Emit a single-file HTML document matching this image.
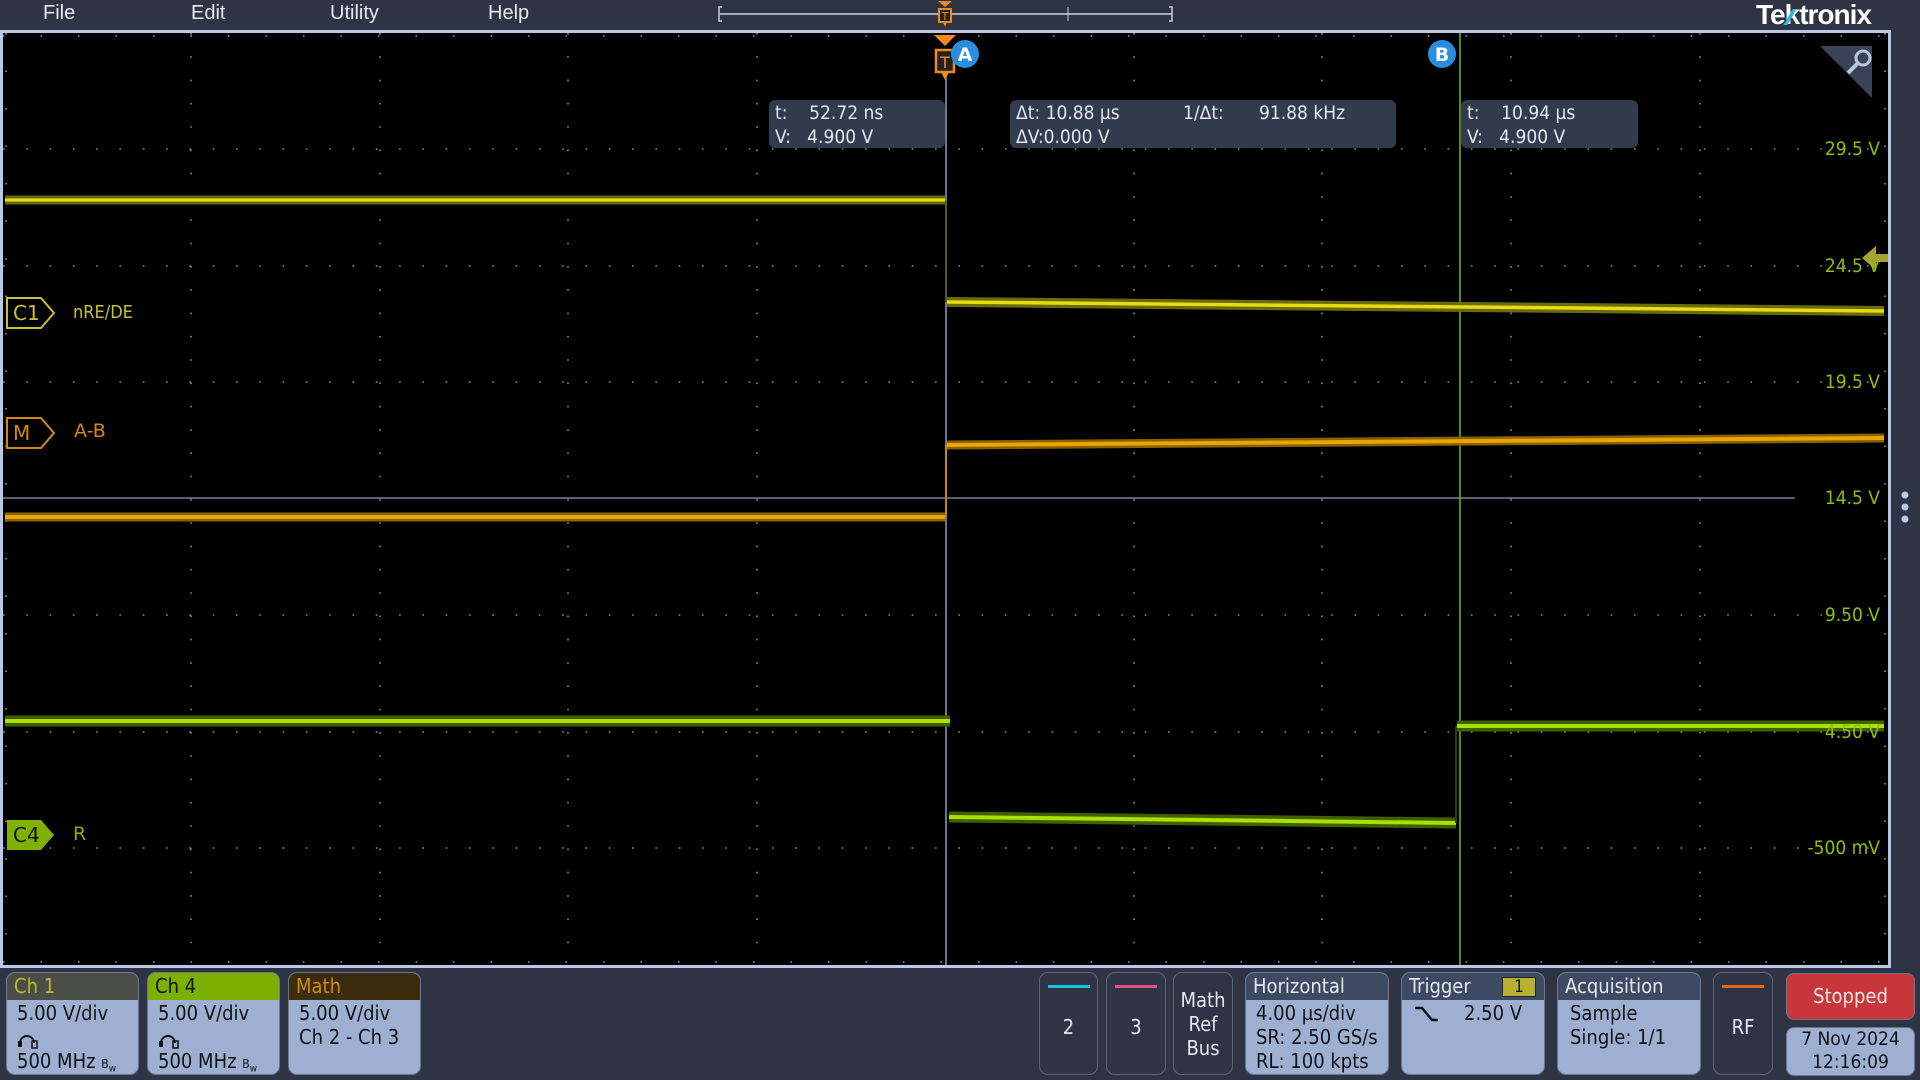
<!DOCTYPE html>
<html><head><meta charset="utf-8"><style>
*{margin:0;padding:0;box-sizing:border-box}
body{width:1920px;height:1080px;background:#2f3445;overflow:hidden;position:relative;font-family:"DejaVu Sans","Liberation Sans",sans-serif;}
.menu{position:absolute;top:2px;color:#e6e9f0;font-size:20px;font-family:"Liberation Sans Narrow","Liberation Sans",sans-serif;}
.ro{position:absolute;background:#323a4d;border-radius:6px;color:#e4e8f0;font-size:19px;line-height:24px;padding:1px 6px;font-family:"DejaVu Sans Condensed","DejaVu Sans",sans-serif;}
.badge{position:absolute;top:972px;height:103px;border-radius:9px;background:#9db0d2;border:1px solid #6c7690;overflow:hidden;font-size:20px;color:#111;font-family:"DejaVu Sans Condensed","DejaVu Sans",sans-serif;}
.badge .h{height:27px;padding-left:7px;line-height:27px}
.badge .b{padding-left:10px;line-height:24px;padding-top:1px}
.btn{position:absolute;top:972px;height:103px;border:1px solid #5c6478;border-radius:9px;color:#e4e8f0;font-size:20px;text-align:center;font-family:"DejaVu Sans Condensed","DejaVu Sans",sans-serif;}
.sc{position:absolute;right:40px;color:#8cc000;font-size:19px;font-family:"DejaVu Sans Condensed","DejaVu Sans",sans-serif;}
</style></head><body>
<div class="menu" style="left:43px">File</div>
<div class="menu" style="left:191px">Edit</div>
<div class="menu" style="left:330px">Utility</div>
<div class="menu" style="left:488px">Help</div>
<div style="position:absolute;left:1756px;top:-1px;color:#fff;font-size:28px;font-weight:bold;letter-spacing:-1px;font-family:'Liberation Sans',sans-serif">Te<span style="color:#fff;position:relative">k<span style="position:absolute;left:3px;top:10px;width:4px;height:16px;background:#2ab8e0;transform:skewX(-30deg)"></span></span>tronix</div>

<svg width="1920" height="1080" style="position:absolute;left:0;top:0">
<line x1="720" y1="14" x2="1172" y2="14" stroke="#c8d2e6" stroke-width="1.5"/>
<path d="M722 7 H719 V21 H722 M1169 7 H1172 V21 H1169" stroke="#c8d2e6" fill="none" stroke-width="1.5"/>
<line x1="1068" y1="7" x2="1068" y2="21" stroke="#c8d2e6"/>
<path d="M938 1 H952 L945 7Z" fill="#f08a1e"/>
<rect x="939" y="9" width="12" height="13" fill="#222" stroke="#f08a1e" stroke-width="2"/>
<text x="945" y="20" font-size="11" fill="#f08a1e" text-anchor="middle" font-family="DejaVu Sans">T</text>
<path d="M943 22 L945 27 L947 22" fill="#f08a1e"/>
<rect x="0" y="30" width="1891" height="938" fill="#b8c8e6"/>
<rect x="3" y="33" width="1885" height="932" fill="#000"/>
<g stroke="#7f8bab" stroke-width="1.6" stroke-dasharray="1.6 21.7">
<line x1="3" y1="149" x2="1888" y2="149"/><line x1="3" y1="266" x2="1888" y2="266"/><line x1="3" y1="382" x2="1888" y2="382"/>
<line x1="3" y1="615" x2="1888" y2="615"/><line x1="3" y1="732" x2="1888" y2="732"/><line x1="3" y1="848" x2="1888" y2="848"/>
</g>
<g stroke="#7f8bab" stroke-width="1.6" stroke-dasharray="1.6 21.7">
<line x1="191" y1="33" x2="191" y2="965"/><line x1="380" y1="33" x2="380" y2="965"/><line x1="568" y1="33" x2="568" y2="965"/><line x1="757" y1="33" x2="757" y2="965"/>
<line x1="1134" y1="33" x2="1134" y2="965"/><line x1="1322" y1="33" x2="1322" y2="965"/><line x1="1511" y1="33" x2="1511" y2="965"/><line x1="1700" y1="33" x2="1700" y2="965"/>
</g>
<g stroke="#8f9bbd" stroke-width="1.5" stroke-dasharray="1.5 36">
<line x1="3" y1="36" x2="1888" y2="36"/><line x1="3" y1="962" x2="1888" y2="962"/>
<line x1="6" y1="33" x2="6" y2="965"/><line x1="1885" y1="33" x2="1885" y2="965"/>
</g>
<line x1="3" y1="498" x2="1795" y2="498" stroke="#8f9bbd" stroke-width="1.2"/>
<line x1="946" y1="70" x2="946" y2="965" stroke="#8f9bbd" stroke-width="1.5"/>
<line x1="1460" y1="33" x2="1460" y2="965" stroke="#7fb800" stroke-width="1.5"/>
<g stroke-linecap="butt">
<line x1="5" y1="200" x2="945" y2="200" stroke="#6a6a10" stroke-width="9"/>
<line x1="5" y1="200" x2="945" y2="200" stroke="#e6dc10" stroke-width="3"/>
<line x1="947" y1="302" x2="1884" y2="311" stroke="#6a6a10" stroke-width="10"/>
<line x1="947" y1="302" x2="1884" y2="311" stroke="#e6dc10" stroke-width="3.5"/>
<line x1="946" y1="302" x2="946" y2="200" stroke="#5a5a10" stroke-width="2"/>
<line x1="5" y1="517" x2="945" y2="517" stroke="#8a6000" stroke-width="9"/>
<line x1="5" y1="517" x2="945" y2="517" stroke="#e8a400" stroke-width="4"/>
<line x1="947" y1="445" x2="1884" y2="438" stroke="#8a6000" stroke-width="9"/>
<line x1="947" y1="445" x2="1884" y2="438" stroke="#e8a400" stroke-width="4"/>
<line x1="946" y1="445" x2="946" y2="517" stroke="#c88a00" stroke-width="2"/>
<line x1="5" y1="721" x2="950" y2="721" stroke="#406000" stroke-width="11"/>
<line x1="5" y1="721" x2="950" y2="721" stroke="#a8e000" stroke-width="4"/>
<line x1="949" y1="817" x2="1456" y2="823" stroke="#406000" stroke-width="11"/>
<line x1="949" y1="817" x2="1456" y2="823" stroke="#a8e000" stroke-width="4"/>
<line x1="1457" y1="726" x2="1884" y2="726" stroke="#406000" stroke-width="11"/>
<line x1="1457" y1="726" x2="1884" y2="726" stroke="#a8e000" stroke-width="4"/>
<line x1="1456" y1="726" x2="1456" y2="823" stroke="#2a4000" stroke-width="2"/>
</g>
<path d="M934 35 H956 L945 46Z" fill="#f08a1e"/>
<rect x="936" y="50" width="18" height="22" fill="#222" stroke="#f08a1e" stroke-width="2.5"/>
<text x="945" y="68" font-size="16" fill="#f08a1e" text-anchor="middle" font-family="DejaVu Sans">T</text>
<path d="M941 72 L945 80 L949 72" fill="#f08a1e"/>
<circle cx="965" cy="54" r="14" fill="#2a8ee0"/><text x="965" y="61" font-size="19" font-weight="bold" fill="#fff" text-anchor="middle" font-family="DejaVu Sans">A</text>
<circle cx="1442" cy="54" r="14" fill="#2a8ee0"/><text x="1442" y="61" font-size="19" font-weight="bold" fill="#fff" text-anchor="middle" font-family="DejaVu Sans">B</text>
<path d="M1820 46 H1872 V98Z" fill="#3a4256"/>
<circle cx="1863" cy="58" r="7" fill="none" stroke="#b8c6e2" stroke-width="3"/>
<line x1="1858" y1="63" x2="1848" y2="73" stroke="#b8c6e2" stroke-width="4"/>
<path d="M7 298 H41 L54 313 L41 328 H7Z" fill="none" stroke="#c8c030" stroke-width="2"/>
<path d="M7 418 H41 L54 433 L41 448 H7Z" fill="none" stroke="#d08a10" stroke-width="2"/>
<path d="M7 820 H41 L54 835 L41 850 H7Z" fill="#80b000"/>
<path d="M1862 258 L1876 246 V254 H1888 V262 H1876 V270Z" fill="#a8a030"/>
<circle cx="1905" cy="495" r="3.5" fill="#b8c8e6"/><circle cx="1905" cy="507" r="3.5" fill="#b8c8e6"/><circle cx="1905" cy="519" r="3.5" fill="#b8c8e6"/>
<path d="M1415 1008 L1422 1008 L1432 1020 L1438 1020" fill="none" stroke="#111" stroke-width="2.5"/>
</svg>
<div style="position:absolute;left:13px;top:301px;color:#c8c030;font-size:20px">C1</div>
<div style="position:absolute;left:73px;top:302px;color:#c8c030;font-size:18px;font-family:'DejaVu Sans Condensed'">nRE/DE</div>
<div style="position:absolute;left:13px;top:421px;color:#d08a10;font-size:20px">M</div>
<div style="position:absolute;left:74px;top:420px;color:#d08a10;font-size:19px">A-B</div>
<div style="position:absolute;left:13px;top:823px;color:#111;font-size:20px">C4</div>
<div style="position:absolute;left:73px;top:823px;color:#80b000;font-size:19px">R</div>

<div class="sc" style="top:138px">29.5 V</div>
<div class="sc" style="top:255px">24.5 V</div>
<div class="sc" style="top:371px">19.5 V</div>
<div class="sc" style="top:487px">14.5 V</div>
<div class="sc" style="top:604px">9.50 V</div>
<div class="sc" style="top:721px">4.50 V</div>
<div class="sc" style="top:837px">-500 mV</div>

<div class="ro" style="left:769px;top:100px;width:176px;height:48px">t:&nbsp;&nbsp;&nbsp;&nbsp;52.72 ns<br>V:&nbsp;&nbsp;&nbsp;4.900 V</div>
<div class="ro" style="left:1010px;top:100px;width:386px;height:48px">Δt: 10.88 µs<span style="position:absolute;left:173px">1/Δt:</span><span style="position:absolute;left:249px">91.88 kHz</span><br>ΔV:0.000 V</div>
<div class="ro" style="left:1461px;top:100px;width:177px;height:48px">t:&nbsp;&nbsp;&nbsp;&nbsp;10.94 µs<br>V:&nbsp;&nbsp;&nbsp;4.900 V</div>

<div class="badge" style="left:6px;width:133px"><div class="h" style="background:#4a4e46;color:#c0b830">Ch 1</div><div class="b">5.00 V/div<br><svg width="24" height="20" style="vertical-align:middle"><path d="M3 14 a7 7 0 0 1 14 0" fill="none" stroke="#111" stroke-width="2"/><rect x="1" y="12" width="4" height="6" fill="#111"/><rect x="15" y="12" width="5" height="7" fill="none" stroke="#111" stroke-width="1.5"/></svg><br>500 MHz <span style="font-size:12px">B<sub>w</sub></span></div></div>
<div class="badge" style="left:147px;width:133px"><div class="h" style="background:#7cb000;color:#111">Ch 4</div><div class="b">5.00 V/div<br><svg width="24" height="20" style="vertical-align:middle"><path d="M3 14 a7 7 0 0 1 14 0" fill="none" stroke="#111" stroke-width="2"/><rect x="1" y="12" width="4" height="6" fill="#111"/><rect x="15" y="12" width="5" height="7" fill="none" stroke="#111" stroke-width="1.5"/></svg><br>500 MHz <span style="font-size:12px">B<sub>w</sub></span></div></div>
<div class="badge" style="left:288px;width:133px"><div class="h" style="background:#3a2c0c;color:#d08a10">Math</div><div class="b">5.00 V/div<br>Ch 2 - Ch 3</div></div>

<div class="btn" style="left:1039px;width:59px"><div style="margin:12px auto 0;width:42px;height:3px;background:#18c0e0"></div><div style="margin-top:27px">2</div></div>
<div class="btn" style="left:1106px;width:60px"><div style="margin:12px auto 0;width:42px;height:3px;background:#e05080"></div><div style="margin-top:27px">3</div></div>
<div class="btn" style="left:1173px;width:60px;line-height:24px;padding-top:15px">Math<br>Ref<br>Bus</div>
<div class="badge" style="left:1245px;width:144px"><div class="h" style="background:#3e4a62;color:#e4e8f0">Horizontal</div><div class="b" style="padding-left:10px">4.00 µs/div<br>SR: 2.50 GS/s<br>RL: 100 kpts</div></div>
<div class="badge" style="left:1401px;width:144px;z-index:-1"><div class="h" style="background:#3e4a62;color:#e4e8f0">Trigger<span style="position:absolute;left:100px;top:4px;width:34px;height:20px;background:#b8b030;border:1px solid #222;color:#111;font-size:17px;line-height:18px;text-align:center">1</span></div><div class="b" style="padding-left:62px">2.50 V</div></div>
<div class="badge" style="left:1557px;width:144px"><div class="h" style="background:#3e4a62;color:#e4e8f0">Acquisition</div><div class="b" style="padding-left:12px">Sample<br>Single: 1/1</div></div>
<div class="btn" style="left:1713px;width:60px"><div style="margin:12px auto 0;width:42px;height:3px;background:#e06818"></div><div style="margin-top:27px">RF</div></div>
<div style="position:absolute;left:1786px;top:973px;width:129px;height:47px;background:#c8363a;border-radius:8px;border:1px solid #6c7690;color:#f0e8e8;font-size:20px;text-align:center;line-height:45px;font-family:'DejaVu Sans Condensed'">Stopped</div>
<div style="position:absolute;left:1786px;top:1027px;width:129px;height:49px;background:#9db0d2;border-radius:8px;border:1px solid #6c7690;color:#111;font-size:19px;text-align:center;line-height:23px;font-family:'DejaVu Sans Condensed'">7 Nov 2024<br>12:16:09</div>
</body></html>
